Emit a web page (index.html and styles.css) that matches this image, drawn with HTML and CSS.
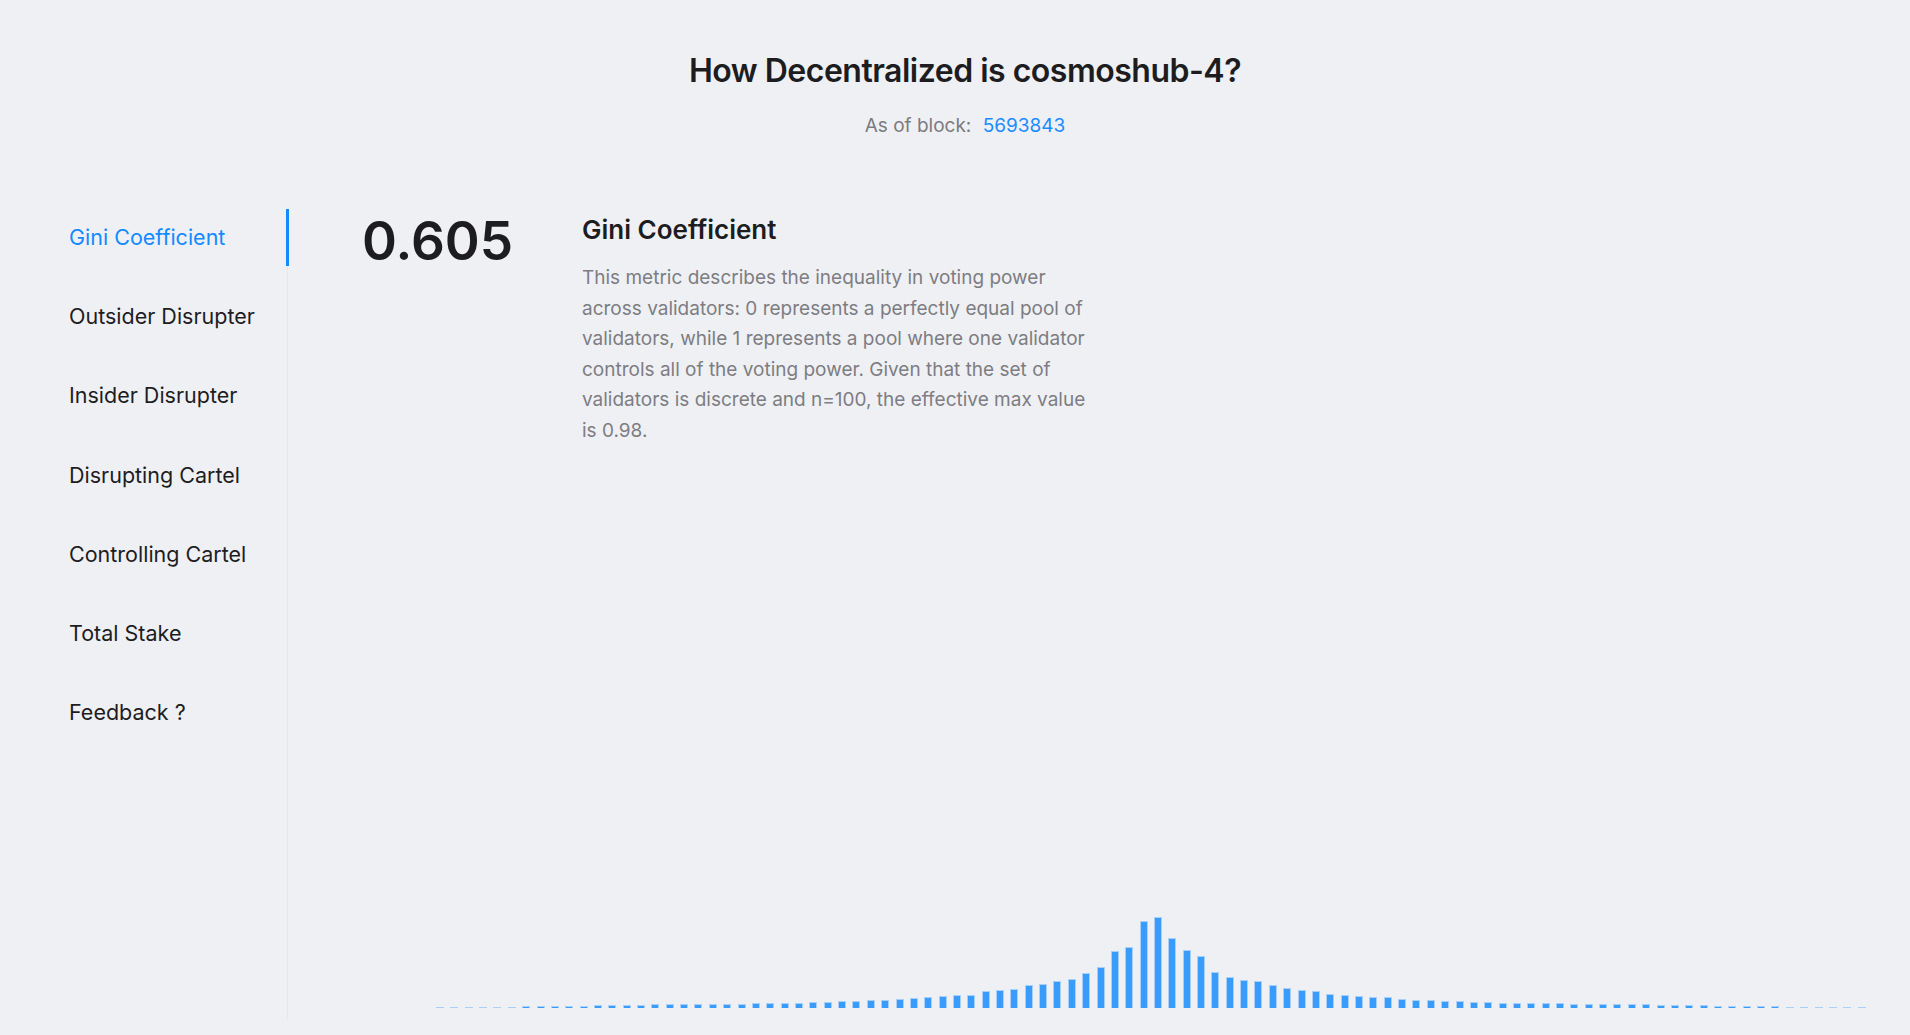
FILE: index.html
```html
<!DOCTYPE html>
<html lang="en">
<head>
<meta charset="utf-8">
<title>How Decentralized is cosmoshub-4?</title>
<link rel="stylesheet" href="styles.css">
</head>
<body>
<header class="page-header">
  <h1 class="title">How Decentralized is cosmoshub-4?</h1>
  <p class="subtitle">As of block: <a class="block-link" href="#">5693843</a></p>
</header>
<main class="layout">
  <nav class="sidebar">
    <a class="nav-item active" href="#">Gini Coefficient</a>
    <a class="nav-item" href="#">Outsider Disrupter</a>
    <a class="nav-item" href="#">Insider Disrupter</a>
    <a class="nav-item" href="#">Disrupting Cartel</a>
    <a class="nav-item" href="#">Controlling Cartel</a>
    <a class="nav-item" href="#">Total Stake</a>
    <a class="nav-item" href="#">Feedback ?</a>
  </nav>
  <section class="content">
    <div class="metric">
      <div class="metric-value">0.605</div>
      <div class="metric-text">
        <h2 class="metric-title">Gini Coefficient</h2>
        <p class="metric-desc">This metric describes the inequality in voting power across validators: 0 represents a perfectly equal pool of validators, while 1 represents a pool where one validator controls all of the voting power. Given that the set of validators is discrete and n=100, the effective max value is 0.98.</p>
      </div>
    </div>
    <div class="chart">
      <div class="bar" style="height:1.3px"></div>
      <div class="bar" style="height:1.3px"></div>
      <div class="bar" style="height:1.3px"></div>
      <div class="bar" style="height:1.3px"></div>
      <div class="bar" style="height:1.3px"></div>
      <div class="bar" style="height:1.3px"></div>
      <div class="bar" style="height:1.7px"></div>
      <div class="bar" style="height:2.3px"></div>
      <div class="bar" style="height:2.3px"></div>
      <div class="bar" style="height:2.3px"></div>
      <div class="bar" style="height:2.3px"></div>
      <div class="bar" style="height:2.7px"></div>
      <div class="bar" style="height:3.3px"></div>
      <div class="bar" style="height:3.3px"></div>
      <div class="bar" style="height:3.3px"></div>
      <div class="bar" style="height:3.7px"></div>
      <div class="bar" style="height:4px"></div>
      <div class="bar" style="height:4px"></div>
      <div class="bar" style="height:4.3px"></div>
      <div class="bar" style="height:4.3px"></div>
      <div class="bar" style="height:4.3px"></div>
      <div class="bar" style="height:4.3px"></div>
      <div class="bar" style="height:5px"></div>
      <div class="bar" style="height:5px"></div>
      <div class="bar" style="height:5px"></div>
      <div class="bar" style="height:5.3px"></div>
      <div class="bar" style="height:5.7px"></div>
      <div class="bar" style="height:5.7px"></div>
      <div class="bar" style="height:6.7px"></div>
      <div class="bar" style="height:7px"></div>
      <div class="bar" style="height:7.7px"></div>
      <div class="bar" style="height:8.3px"></div>
      <div class="bar" style="height:8.7px"></div>
      <div class="bar" style="height:10px"></div>
      <div class="bar" style="height:10.7px"></div>
      <div class="bar" style="height:12.3px"></div>
      <div class="bar" style="height:12.7px"></div>
      <div class="bar" style="height:13.3px"></div>
      <div class="bar" style="height:17px"></div>
      <div class="bar" style="height:17.7px"></div>
      <div class="bar" style="height:19px"></div>
      <div class="bar" style="height:23px"></div>
      <div class="bar" style="height:23.7px"></div>
      <div class="bar" style="height:27.3px"></div>
      <div class="bar" style="height:28.7px"></div>
      <div class="bar" style="height:35.3px"></div>
      <div class="bar" style="height:40.7px"></div>
      <div class="bar" style="height:57px"></div>
      <div class="bar" style="height:61px"></div>
      <div class="bar" style="height:87.3px"></div>
      <div class="bar" style="height:91px"></div>
      <div class="bar" style="height:70.3px"></div>
      <div class="bar" style="height:58px"></div>
      <div class="bar" style="height:52.3px"></div>
      <div class="bar" style="height:36px"></div>
      <div class="bar" style="height:31px"></div>
      <div class="bar" style="height:28.3px"></div>
      <div class="bar" style="height:27.3px"></div>
      <div class="bar" style="height:23px"></div>
      <div class="bar" style="height:19.7px"></div>
      <div class="bar" style="height:18.3px"></div>
      <div class="bar" style="height:17.3px"></div>
      <div class="bar" style="height:14px"></div>
      <div class="bar" style="height:13px"></div>
      <div class="bar" style="height:12.3px"></div>
      <div class="bar" style="height:11.3px"></div>
      <div class="bar" style="height:10.7px"></div>
      <div class="bar" style="height:9.3px"></div>
      <div class="bar" style="height:8.3px"></div>
      <div class="bar" style="height:8px"></div>
      <div class="bar" style="height:7.3px"></div>
      <div class="bar" style="height:7px"></div>
      <div class="bar" style="height:6px"></div>
      <div class="bar" style="height:5.7px"></div>
      <div class="bar" style="height:5.3px"></div>
      <div class="bar" style="height:5.3px"></div>
      <div class="bar" style="height:5px"></div>
      <div class="bar" style="height:5px"></div>
      <div class="bar" style="height:5px"></div>
      <div class="bar" style="height:4.3px"></div>
      <div class="bar" style="height:4.3px"></div>
      <div class="bar" style="height:4px"></div>
      <div class="bar" style="height:4px"></div>
      <div class="bar" style="height:3.7px"></div>
      <div class="bar" style="height:3.7px"></div>
      <div class="bar" style="height:3.3px"></div>
      <div class="bar" style="height:3px"></div>
      <div class="bar" style="height:3px"></div>
      <div class="bar" style="height:2.7px"></div>
      <div class="bar" style="height:2.3px"></div>
      <div class="bar" style="height:2.3px"></div>
      <div class="bar" style="height:2.3px"></div>
      <div class="bar" style="height:2px"></div>
      <div class="bar" style="height:1.7px"></div>
      <div class="bar" style="height:1.3px"></div>
      <div class="bar" style="height:1.3px"></div>
      <div class="bar" style="height:1px"></div>
      <div class="bar" style="height:1px"></div>
      <div class="bar" style="height:1px"></div>
      <div class="bar" style="height:1px"></div>
    </div>
  </section>
</main>
</body>
</html>
```
FILE: styles.css
```css
* { box-sizing: border-box; }

html, body {
  margin: 0;
  padding: 0;
  background: #eff0f4;
  height: 100%;
  overflow: hidden;
}

body {
  font-family: Inter, "Noto Sans", "Liberation Sans", sans-serif;
  color: #1d1d1f;
  display: flex;
  flex-direction: column;
}

.page-header {
  height: 209px;
  padding-top: 51px;
  padding-left: 20px;
  text-align: center;
  flex: none;
}

.title {
  margin: 0;
  font-size: 32px;
  line-height: 40px;
  font-weight: 600;
  letter-spacing: -0.5px;
  color: #1d1d1f;
}

.subtitle {
  margin: 21.5px 0 0;
  font-size: 19px;
  line-height: 26px;
  color: #7b7b80;
}

.block-link {
  color: #1a8cff;
  text-decoration: none;
  margin-left: 6px;
}

.layout {
  display: flex;
  height: 811px;
  flex: none;
}

.sidebar {
  width: 288px;
  flex: none;
  border-right: 1px solid #e7e8ec;
  display: flex;
  flex-direction: column;
  gap: 22.2px;
}

.nav-item {
  position: relative;
  display: block;
  height: 57px;
  line-height: 57px;
  padding-left: 69px;
  font-size: 21.5px;
  color: #1d1d1f;
  text-decoration: none;
}

.nav-item.active {
  color: #148aff;
}

.nav-item.active::after {
  content: "";
  position: absolute;
  top: 0;
  right: -2px;
  width: 3px;
  height: 100%;
  background: #148aff;
}

.content {
  flex: 1;
  display: flex;
  flex-direction: column;
  padding: 5px 43px 12px 74px;
}

.metric {
  display: flex;
  align-items: flex-start;
}

.metric-value {
  width: 220px;
  flex: none;
  font-size: 53px;
  line-height: 54px;
  font-weight: 600;
  margin-top: 0;
  color: #1d1d1f;
}

.metric-text {
  width: 514px;
}

.metric-title {
  margin: 0;
  font-size: 26px;
  line-height: 32px;
  font-weight: 600;
  color: #1d1d1f;
}

.metric-desc {
  margin: 17px 0 0;
  font-size: 19px;
  line-height: 30.5px;
  color: #7d7d82;
}

.chart {
  margin-top: auto;
  margin-left: 74px;
  display: flex;
  justify-content: space-between;
  align-items: flex-end;
  width: 1431px;
}

.bar {
  width: 8px;
  flex: none;
  background: #3a9cfa;
  border: 1px solid #a9d0f8;
  border-bottom: none;
}
```
